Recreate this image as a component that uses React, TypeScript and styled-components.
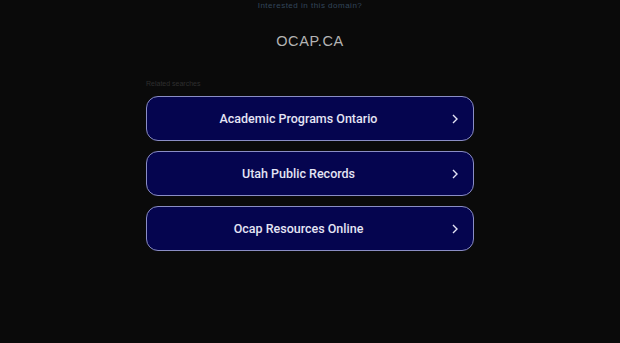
import React from "react";
import styled, { createGlobalStyle } from "styled-components";

const GlobalStyle = createGlobalStyle`
  html, body {
    margin: 0;
    padding: 0;
    background: #0a0a0a;
    font-family: "Liberation Sans", Arial, sans-serif;
  }
`;

const Page = styled.div`
  width: 620px;
  height: 343px;
  display: flex;
  flex-direction: column;
  align-items: center;
  overflow: hidden;
`;

const Banner = styled.div`
  font-size: 8px;
  letter-spacing: 0.5px;
  color: #33465a;
  line-height: 10px;
  margin-top: 1px;
`;

const Domain = styled.h1`
  margin: 22px 0 0;
  font-size: 14.5px;
  font-weight: 400;
  letter-spacing: 0.6px;
  color: #b4b4b4;
  line-height: 16px;
`;

const Related = styled.div`
  width: 328px;
  margin-top: 31px;
`;

const Caption = styled.div`
  font-size: 7px;
  color: #2f2f2f;
  line-height: 8px;
  margin-bottom: 8px;
`;

const List = styled.div`
  display: flex;
  flex-direction: column;
  gap: 10px;
`;

const Link = styled.a`
  position: relative;
  display: flex;
  align-items: center;
  justify-content: center;
  box-sizing: border-box;
  height: 45px;
  padding-right: 23px;
  border: 1px solid #8a8dc4;
  border-radius: 12px;
  background: #05054f;
  color: #e4e4f4;
  font-family: Roboto, "Liberation Sans", sans-serif;
  font-size: 12.5px;
  font-weight: 500;
  text-decoration: none;
`;

const Chevron = styled.svg`
  position: absolute;
  right: 15px;
  top: 50%;
  margin-top: -5px;
`;

const items = ["Academic Programs Ontario", "Utah Public Records", "Ocap Resources Online"];

export default function App() {
  return (
    <>
      <GlobalStyle />
      <Page>
        <Banner>Interested in this domain?</Banner>
        <Domain>OCAP.CA</Domain>
        <Related>
          <Caption>Related searches</Caption>
          <List>
            {items.map((t) => (
              <Link key={t} href="#">
                {t}
                <Chevron width="6" height="10" viewBox="0 0 6 10">
                  <path d="M1 1l4 4-4 4" fill="none" stroke="#e4e4f4" strokeWidth="1.4" />
                </Chevron>
              </Link>
            ))}
          </List>
        </Related>
      </Page>
    </>
  );
}
